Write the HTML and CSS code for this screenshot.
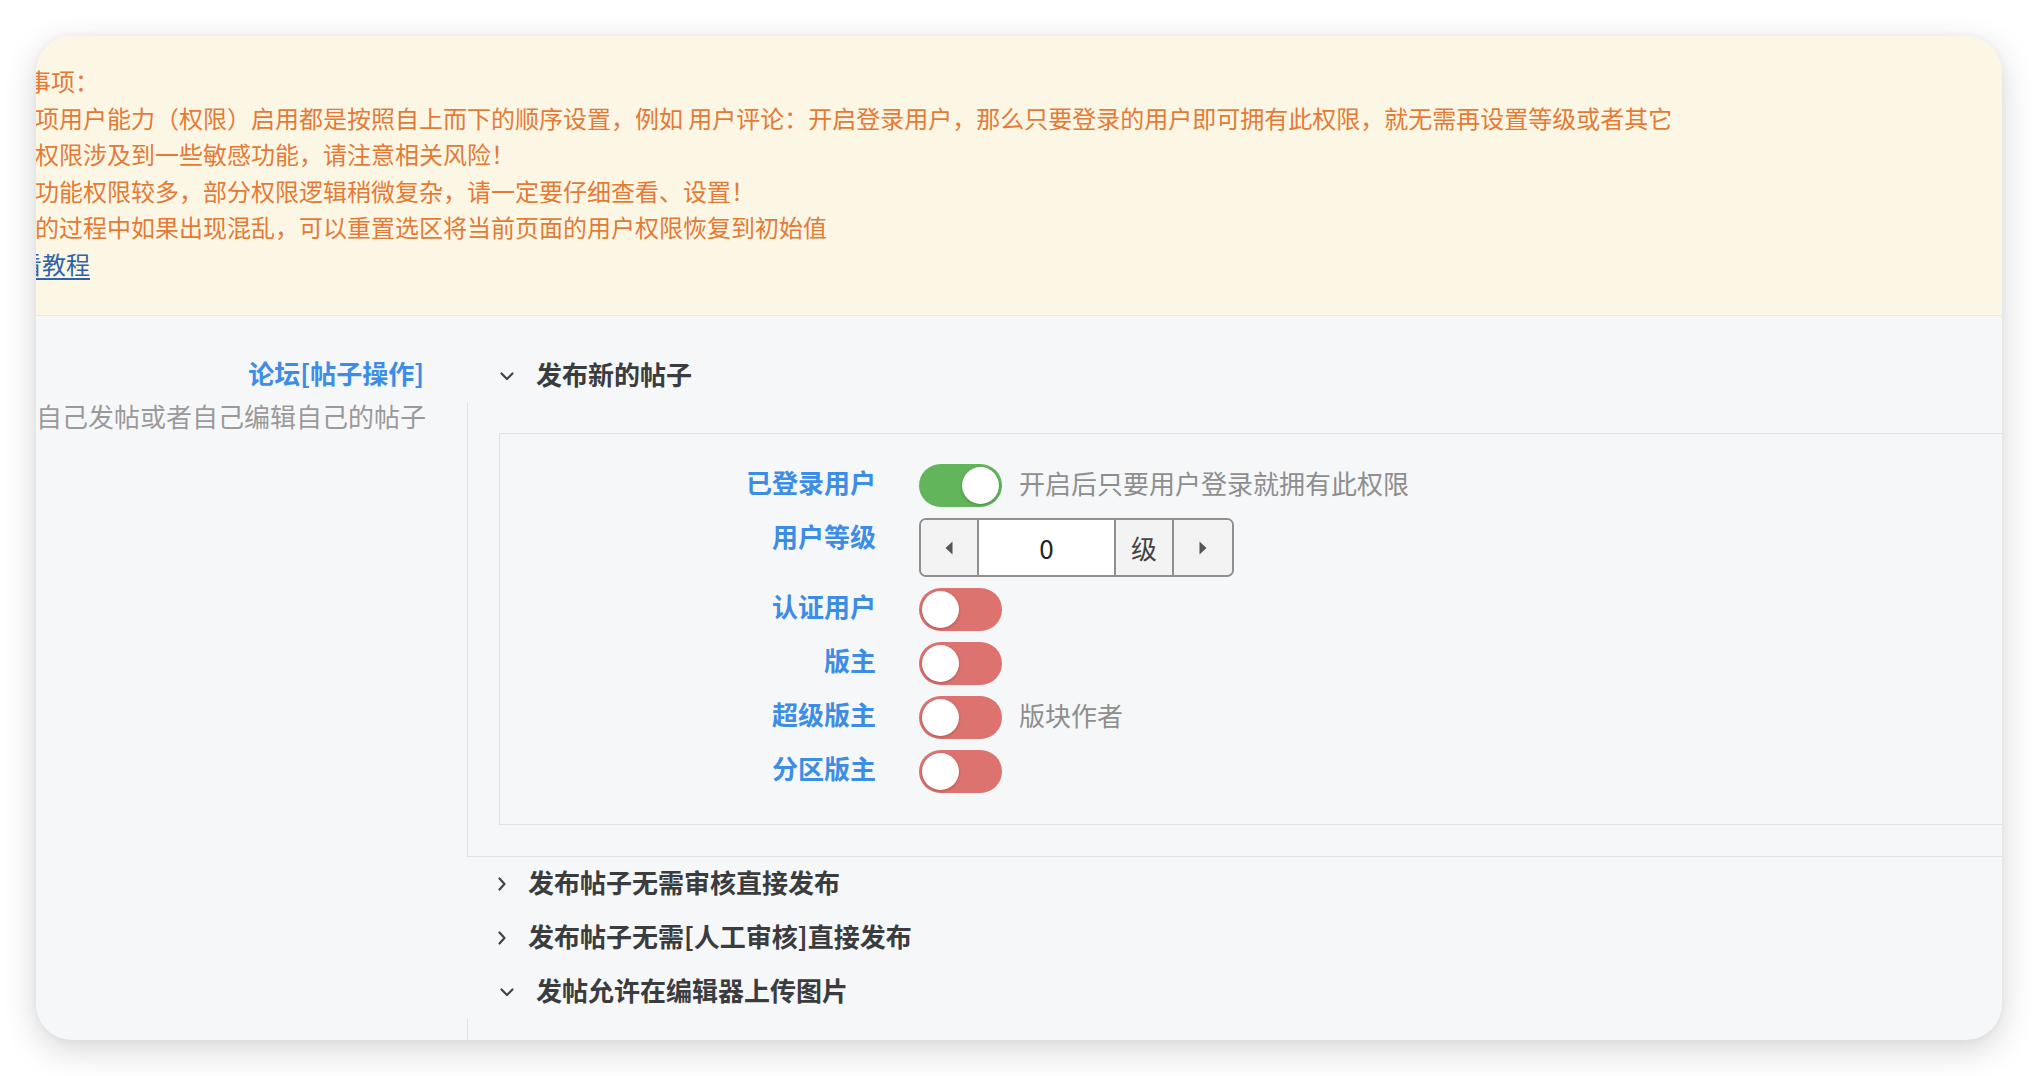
FILE: index.html
```html
<!DOCTYPE html>
<html lang="zh-CN">
<head>
<meta charset="utf-8">
<title>用户权限设置</title>
<link rel="stylesheet" href="styles.css">
</head>
<body>
<div class="card">
  <div class="notice">
    <div class="line cut-1">注意事项：</div>
    <div class="line cut-2">项用户能力（权限）启用都是按照自上而下的顺序设置，例如 用户评论：开启登录用户，那么只要登录的用户即可拥有此权限，就无需再设置等级或者其它</div>
    <div class="line cut-2">权限涉及到一些敏感功能，请注意相关风险！</div>
    <div class="line cut-2">功能权限较多，部分权限逻辑稍微复杂，请一定要仔细查看、设置！</div>
    <div class="line cut-2">的过程中如果出现混乱，可以重置选区将当前页面的用户权限恢复到初始值</div>
    <div class="line cut-6"><a class="link" href="#">查看教程</a></div>
  </div>

  <div class="section">
    <div class="side">
      <div class="side-title">论坛[帖子操作]</div>
      <div class="side-desc">自己发帖或者自己编辑自己的帖子</div>
    </div>

    <div class="panels">
      <div class="panel-head open">
        <svg class="chev-down" width="14" height="9" viewBox="0 0 14 9"><polyline points="1.5,1.5 7,7 12.5,1.5" fill="none" stroke="#444" stroke-width="2.2" stroke-linecap="round" stroke-linejoin="round"/></svg>
        <span class="head-text">发布新的帖子</span>
      </div>
      <div class="panel-body">
        <div class="inner">
          <div class="row">
            <div class="label">已登录用户</div>
            <div class="toggle on"><span class="knob"></span></div>
            <div class="hint">开启后只要用户登录就拥有此权限</div>
          </div>
          <div class="row">
            <div class="label">用户等级</div>
            <div class="stepper">
              <div class="step-btn"><svg width="8" height="16" viewBox="0 0 8 16"><polygon points="7.5,1.5 0.5,8 7.5,14.5" fill="#555"/></svg></div>
              <div class="step-val">0</div>
              <div class="step-unit">级</div>
              <div class="step-btn last"><svg width="8" height="16" viewBox="0 0 8 16"><polygon points="0.5,1.5 7.5,8 0.5,14.5" fill="#555"/></svg></div>
            </div>
          </div>
          <div class="row">
            <div class="label">认证用户</div>
            <div class="toggle off"><span class="knob"></span></div>
          </div>
          <div class="row">
            <div class="label">版主</div>
            <div class="toggle off"><span class="knob"></span></div>
          </div>
          <div class="row">
            <div class="label">超级版主</div>
            <div class="toggle off"><span class="knob"></span></div>
            <div class="hint">版块作者</div>
          </div>
          <div class="row">
            <div class="label">分区版主</div>
            <div class="toggle off"><span class="knob"></span></div>
          </div>
        </div>
      </div>

      <div class="panel-head closed">
        <svg class="chev-right" width="8" height="14" viewBox="0 0 8 14"><polyline points="1.5,1.5 6.5,7 1.5,12.5" fill="none" stroke="#444" stroke-width="2.2" stroke-linecap="round" stroke-linejoin="round"/></svg>
        <span class="head-text">发布帖子无需审核直接发布</span>
      </div>
      <div class="panel-head closed">
        <svg class="chev-right" width="8" height="14" viewBox="0 0 8 14"><polyline points="1.5,1.5 6.5,7 1.5,12.5" fill="none" stroke="#444" stroke-width="2.2" stroke-linecap="round" stroke-linejoin="round"/></svg>
        <span class="head-text">发布帖子无需[人工审核]直接发布</span>
      </div>
      <div class="panel-head open">
        <svg class="chev-down" width="14" height="9" viewBox="0 0 14 9"><polyline points="1.5,1.5 7,7 12.5,1.5" fill="none" stroke="#444" stroke-width="2.2" stroke-linecap="round" stroke-linejoin="round"/></svg>
        <span class="head-text">发帖允许在编辑器上传图片</span>
      </div>
      <div class="panel-body tail"></div>
    </div>
  </div>
</div>
</body>
</html>
```

FILE: styles.css
```css
* { box-sizing: border-box; }

html, body {
  margin: 0;
  padding: 0;
  background: #ffffff;
  height: 1076px;
  overflow: hidden;
}

body {
  font-family: "Noto Sans CJK SC", "Noto Sans", "Liberation Sans", sans-serif;
  padding: 36px;
}

.card {
  width: 1966px;
  height: 1004px;
  border-radius: 36px;
  overflow: hidden;
  background: #f6f7f9;
  box-shadow: 0 10px 34px rgba(0, 0, 0, 0.16), 0 0 8px rgba(0, 0, 0, 0.05);
  display: flex;
  flex-direction: column;
}

/* ---------- notice ---------- */
.notice {
  height: 280px;
  flex: none;
  background: #fcf7e5;
  border-bottom: 1px solid #f1e8d0;
  padding-top: 27px;
  color: #e57a36;
  font-size: 24px;
  line-height: 36.5px;
  white-space: nowrap;
}

.line { display: block; }
.cut-1 { margin-left: -57px; }
.cut-2 { margin-left: -1px; }
.cut-6 { margin-left: -42px; }

.link {
  color: #2f62a8;
  text-decoration: underline;
  text-underline-offset: 4px;
}

/* ---------- lower section ---------- */
.section {
  flex: 1;
  display: flex;
  padding-top: 33px;
  min-height: 0;
}

.side {
  width: 431px;
  flex: none;
  padding-right: 43px;
  text-align: right;
  white-space: nowrap;
}

.side-title {
  font-size: 26px;
  line-height: 48px;
  font-weight: 700;
  color: #3d8de6;
}

.side-desc {
  font-size: 26px;
  line-height: 32px;
  margin-top: 3px;
  color: #9a9a9a;
}

.panels {
  flex: 1;
  margin-right: -40px;
  display: flex;
  flex-direction: column;
}

.panel-head {
  height: 54px;
  flex: none;
  display: flex;
  align-items: center;
  padding-left: 33px;
  gap: 22px;
  white-space: nowrap;
}

.panel-head.closed { padding-left: 31px; }

.head-text {
  font-size: 26px;
  font-weight: 700;
  color: #3b3c3e;
  margin-bottom: 5px;
}

.chev-down { margin-top: 1px; }

.panel-body {
  border-left: 1px solid #dfe1e5;
  border-bottom: 1px solid #dfe1e5;
  padding: 30px 0 31px 31px;
}

.panel-body.tail {
  flex: 1;
  border-bottom: none;
  padding: 0;
}

.inner {
  border: 1px solid #dfe1e5;
  padding: 30px 0 31px 0;
}

.row {
  display: flex;
  align-items: flex-start;
  margin-bottom: 11px;
}

.row:last-child { margin-bottom: 0; }

.label {
  width: 376px;
  flex: none;
  text-align: right;
  font-size: 26px;
  line-height: 36px;
  font-weight: 700;
  color: #3d8de6;
  margin-right: 43px;
}

.toggle {
  width: 83px;
  height: 43px;
  border-radius: 22px;
  flex: none;
  display: flex;
  align-items: center;
  padding: 0 3px;
}

.toggle.on {
  background: #62b55b;
  justify-content: flex-end;
}

.toggle.off {
  background: #dd736f;
  justify-content: flex-start;
}

.knob {
  width: 37px;
  height: 37px;
  border-radius: 50%;
  background: #ffffff;
  box-shadow: 0 1px 3px rgba(0, 0, 0, 0.25);
}

.hint {
  margin-left: 17px;
  font-size: 26px;
  line-height: 38px;
  color: #8e8e8e;
  white-space: nowrap;
}

.stepper {
  display: flex;
  height: 59px;
  border: 2px solid #8f8f8f;
  border-radius: 7px;
  overflow: hidden;
  font-size: 26px;
  color: #333;
}

.step-btn {
  width: 58px;
  display: flex;
  align-items: center;
  justify-content: center;
  background: #f3f3f3;
  border-right: 2px solid #8f8f8f;
}

.step-btn.last { border-right: none; }

.step-val {
  width: 137px;
  background: #ffffff;
  border-right: 2px solid #8f8f8f;
  display: flex;
  align-items: center;
  justify-content: center;
  color: #222;
}

.step-unit {
  width: 58px;
  background: #f3f3f3;
  border-right: 2px solid #8f8f8f;
  display: flex;
  align-items: center;
  justify-content: center;
  color: #444;
}
```
